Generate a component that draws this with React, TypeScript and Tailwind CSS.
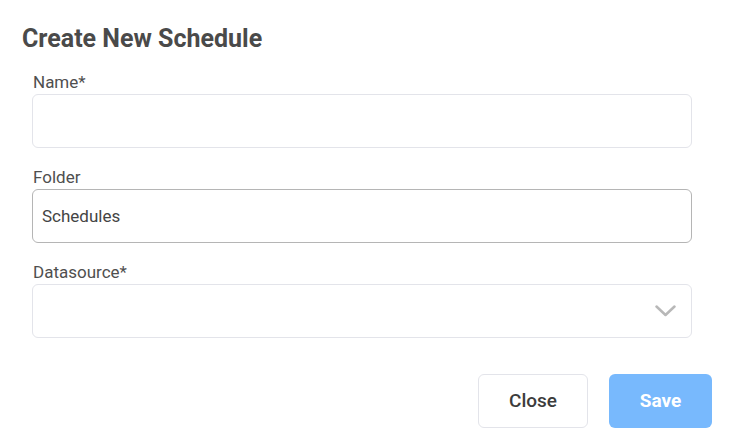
export default function App() {
    return (
        <div className="w-[733px] h-[448px] bg-white font-['Roboto',sans-serif] overflow-hidden">
            <div className="pl-[22px] pt-[24px]">
                <h2 className="text-[25px] leading-[30px] font-bold text-[#4a4a4a]">Create New Schedule</h2>
            </div>
            <div className="pl-[32px] w-[692px] mt-[18px] flex flex-col">
                <label className="text-[17px] leading-[20px] text-[#4f4f4f] pl-px">Name*</label>
                <input className="mt-[2px] h-[54px] w-full rounded-md border border-[#e3e4ea] px-[10px] text-[17px] outline-none" />

                <label className="mt-[19px] text-[17px] leading-[20px] text-[#4f4f4f] pl-px">Folder</label>
                <input
                    defaultValue="Schedules"
                    className="mt-[2px] h-[54px] w-full rounded-md border border-[#b5b5b5] px-[9px] text-[17px] text-[#444] outline-none"
                />

                <label className="mt-[19px] text-[17px] leading-[20px] text-[#4f4f4f] pl-px">Datasource*</label>
                <div className="mt-[2px] h-[54px] w-full rounded-md border border-[#e3e4ea] flex items-center justify-end pr-[15px]">
                    <svg width="21" height="12" viewBox="0 0 21 12" fill="none">
                        <polyline points="1.5,1.5 10.5,10 19.5,1.5" stroke="#b8b8b8" strokeWidth="2.5" strokeLinecap="round" strokeLinejoin="round" />
                    </svg>
                </div>
            </div>
            <div className="flex justify-end gap-[21px] pr-[21px] mt-[36px]">
                <button className="w-[110px] h-[54px] rounded-md border border-[#e3e4ea] bg-white text-[19px] font-medium text-[#3c3c3c]">
                    Close
                </button>
                <button className="w-[103px] h-[54px] rounded-md bg-[#78b9fd] text-[19px] font-bold text-white">
                    Save
                </button>
            </div>
        </div>
    )
}
